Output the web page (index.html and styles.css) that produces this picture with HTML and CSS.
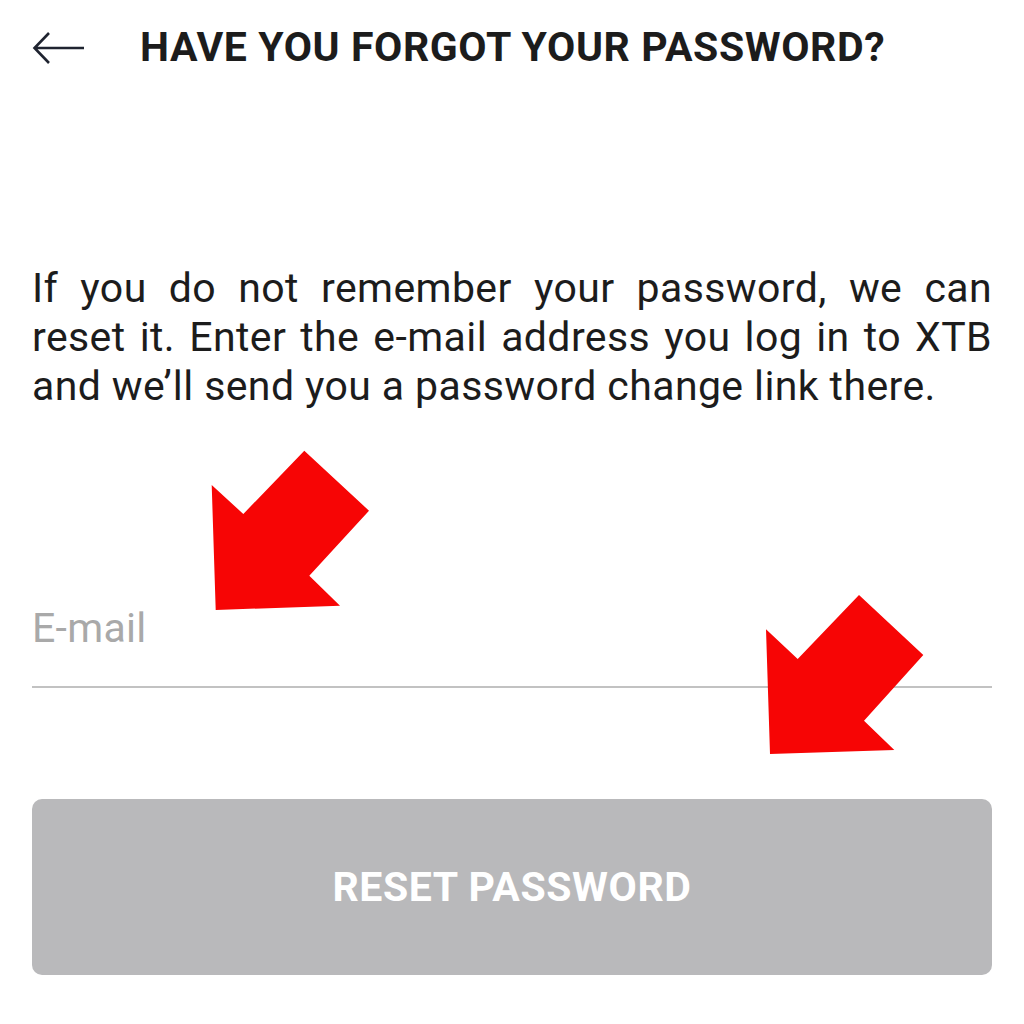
FILE: index.html
```html
<!DOCTYPE html>
<html lang="en">
<head>
<meta charset="utf-8">
<title>Forgot password</title>
<link rel="stylesheet" href="styles.css">
</head>
<body>
<div class="screen">
  <header class="topbar">
    <svg class="back" width="54" height="34" viewBox="0 0 54 34" aria-hidden="true">
      <path d="M52 17H3M17 2L2.5 17L17 32" fill="none" stroke="#1f2430" stroke-width="2.6" stroke-linecap="butt" stroke-linejoin="miter"/>
    </svg>
    <h1 class="title">HAVE YOU FORGOT YOUR PASSWORD?</h1>
  </header>
  <p class="intro">If you do not remember your password, we can reset it. Enter the e-mail address you log in to XTB and we’ll send you a password change link there.</p>
  <div class="field"><span class="placeholder">E-mail</span></div>
  <button class="reset">RESET PASSWORD</button>
  <svg class="overlay" width="1024" height="1024" viewBox="0 0 1024 1024" aria-hidden="true">
    <polygon points="211.7,485 243.3,514 304.3,450.7 369,510.7 309.3,575.7 340,605.7 215.7,610" fill="#f70505"/>
    <polygon points="766,629.3 797.7,659 859,595 923.3,655 864,720.7 894.3,750 770,754" fill="#f70505"/>
  </svg>
</div>
</body>
</html>
```

FILE: styles.css
```css
* { box-sizing: border-box; }
html, body { margin: 0; padding: 0; background: #ffffff; }
body { font-family: Roboto, "Noto Sans", sans-serif; color: #1b1b1b; }
.screen { position: relative; width: 1024px; height: 1024px; padding: 0 32px; overflow: hidden; }
.topbar { height: 94px; display: flex; align-items: center; }
.back { display: block; flex: none; margin-top: 2px; }
.title { margin: 0 0 0 54px; font-size: 41px; font-weight: 700; letter-spacing: 0.6px; color: #1c1c1c; line-height: 1; }
.intro { margin: 170px 0 0; font-size: 41px; line-height: 49px; text-align: justify; color: #1c1c1c; letter-spacing: 0.4px; }
.field { margin-top: 193px; padding-bottom: 33px; border-bottom: 2px solid #c2c2c2; }
.placeholder { display: block; font-size: 41px; line-height: 49px; color: #a9a9a9; letter-spacing: 0.3px; }
.reset { display: flex; align-items: center; justify-content: center; width: 100%; height: 176px; margin-top: 111px; border: 0; border-radius: 10px; background: #b9b9bb; color: #ffffff; font-family: Roboto, sans-serif; font-size: 41px; font-weight: 700; letter-spacing: 0.6px; }
.overlay { position: absolute; left: 0; top: 0; pointer-events: none; }
```
